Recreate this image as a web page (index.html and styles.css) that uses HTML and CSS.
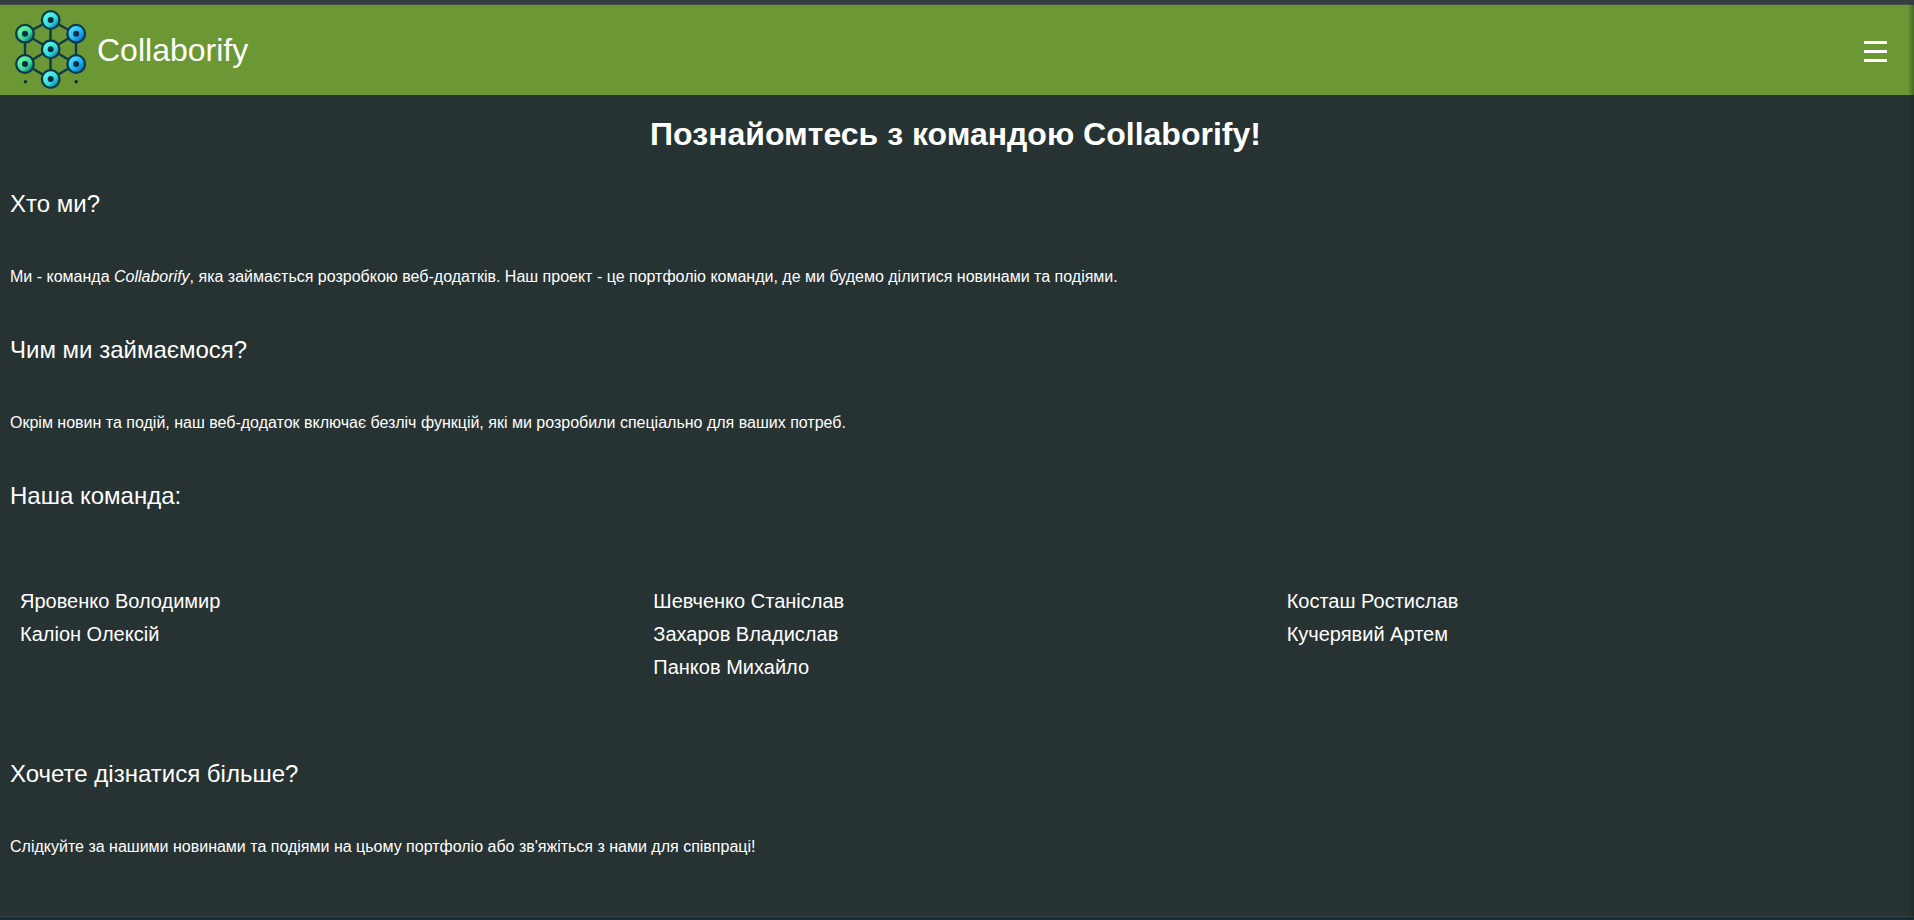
FILE: index.html
```html
<!DOCTYPE html>
<html lang="uk">
<head>
<meta charset="utf-8">
<title>Collaborify</title>
<link rel="stylesheet" href="styles.css">
</head>
<body>
<div class="page">
  <header class="header">
    <div class="brand">
      <svg class="logo" width="90" height="90" viewBox="0 0 90 90">
        <defs>
          <linearGradient id="green" x1="0" y1="0" x2="1" y2="1"><stop offset=".25" stop-color="#63f3a2"/><stop offset=".6" stop-color="#3fd695"/><stop offset=".75" stop-color="#1a9c88"/></linearGradient>
          <linearGradient id="cyan" x1="0" y1="0" x2="1" y2="1"><stop offset=".25" stop-color="#5af5e6"/><stop offset=".6" stop-color="#2ed9dd"/><stop offset=".8" stop-color="#148fb0"/></linearGradient>
          <linearGradient id="blue" x1="0" y1="0" x2="1" y2="1"><stop offset=".2" stop-color="#45dcff"/><stop offset=".55" stop-color="#20b6f5"/><stop offset=".8" stop-color="#087bd0"/></linearGradient>
        </defs>
        <path d="M50.5 15 76 29V59L50.5 74 25 59V29ZM50.5 15V74M25 29 76 59M76 29 25 59" fill="none" stroke="#0b3c4a" stroke-width="2.4"/>
        <g stroke="#0b3b4b" stroke-width="2.3">
          <circle cx="50.7" cy="15" r="8.8" fill="url(#cyan)"/>
          <circle cx="25" cy="28.7" r="8.8" fill="url(#green)"/>
          <circle cx="76.2" cy="28.7" r="8.8" fill="url(#blue)"/>
          <circle cx="50.7" cy="44.3" r="8.8" fill="url(#cyan)"/>
          <circle cx="25" cy="59" r="8.8" fill="url(#green)"/>
          <circle cx="76.2" cy="59" r="8.8" fill="url(#blue)"/>
          <circle cx="50.7" cy="74" r="8.8" fill="url(#cyan)"/>
        </g>
        <g fill="#082b43">
          <circle cx="50.7" cy="15" r="3"/><circle cx="25" cy="28.7" r="3"/><circle cx="76.2" cy="28.7" r="3"/>
          <circle cx="50.7" cy="44.3" r="3"/><circle cx="25" cy="59" r="3"/><circle cx="76.2" cy="59" r="3"/>
          <circle cx="50.7" cy="74" r="3"/><circle cx="25.5" cy="76.7" r="1.7"/><circle cx="76.2" cy="76.7" r="1.7"/>
        </g>
      </svg>
      <span class="brand-name">Collaborify</span>
    </div>
    <svg class="menu" width="23" height="22" viewBox="0 0 23 22"><path d="M0 1.5H23M0 10.5H23M0 19.5H23" stroke="#fff" stroke-width="3"/></svg>
  </header>
  <main class="content">
    <h1 class="title">Познайомтесь з командою Collaborify!</h1>
    <h2 class="heading">Хто ми?</h2>
    <p class="text">Ми - команда <em>Collaborify</em>, яка займається розробкою веб-додатків. Наш проект - це портфоліо команди, де ми будемо ділитися новинами та подіями.</p>
    <h2 class="heading">Чим ми займаємося?</h2>
    <p class="text">Окрім новин та подій, наш веб-додаток включає безліч функцій, які ми розробили спеціально для ваших потреб.</p>
    <h2 class="heading">Наша команда:</h2>
    <div class="team">
      <ul class="column"><li>Яровенко Володимир</li><li>Каліон Олексій</li></ul>
      <ul class="column"><li>Шевченко Станіслав</li><li>Захаров Владислав</li><li>Панков Михайло</li></ul>
      <ul class="column"><li>Косташ Ростислав</li><li>Кучерявий Артем</li></ul>
    </div>
    <h2 class="heading">Хочете дізнатися більше?</h2>
    <p class="text">Слідкуйте за нашими новинами та подіями на цьому портфоліо або зв'яжіться з нами для співпраці!</p>
  </main>
  <div class="edge"></div>
</div>
</body>
</html>
```
FILE: styles.css
```css
* { box-sizing: border-box; margin: 0; padding: 0; }

body {
  background: #273233;
  color: #fff;
  font-family: "Liberation Sans", Arial, sans-serif;
}

.page {
  position: relative;
  display: flex;
  flex-direction: column;
  height: 920px;
  overflow: hidden;
  border-top: 4px solid #343d41;
  border-bottom: 3px solid #172d32;
}

.header {
  display: flex;
  justify-content: space-between;
  flex: none;
  height: 91px;
  border-top: 1px solid #4a4d49;
  background: #6b9734;
}

.brand { display: flex; }

.brand-name { margin-left: 7px; font-size: 32px; line-height: 90px; }

.menu { margin: 36px 27px 0 0; }

.content { flex: 1; padding: 20px 10px 0; border-bottom: 1px solid #3b4545; }

.title {
  padding-right: 3px;
  font-size: 32px;
  line-height: 38px;
  text-align: center;
  margin-bottom: 37px;
}

.heading { font-size: 24px; font-weight: 400; line-height: 28px; margin-bottom: 50px; }

.text { font-size: 16px; line-height: 18px; margin-bottom: 50px; }

.team {
  display: grid;
  grid-template-columns: repeat(3, 633.33px);
  height: 175px;
  margin-top: 75px;
  padding-left: 10px;
}

.column { list-style: none; font-size: 20px; line-height: 33px; }

.edge {
  position: absolute;
  inset: 0 0 0 auto;
  width: 6px;
  background: linear-gradient(to right, transparent, rgba(20, 35, 30, .42));
}
```
